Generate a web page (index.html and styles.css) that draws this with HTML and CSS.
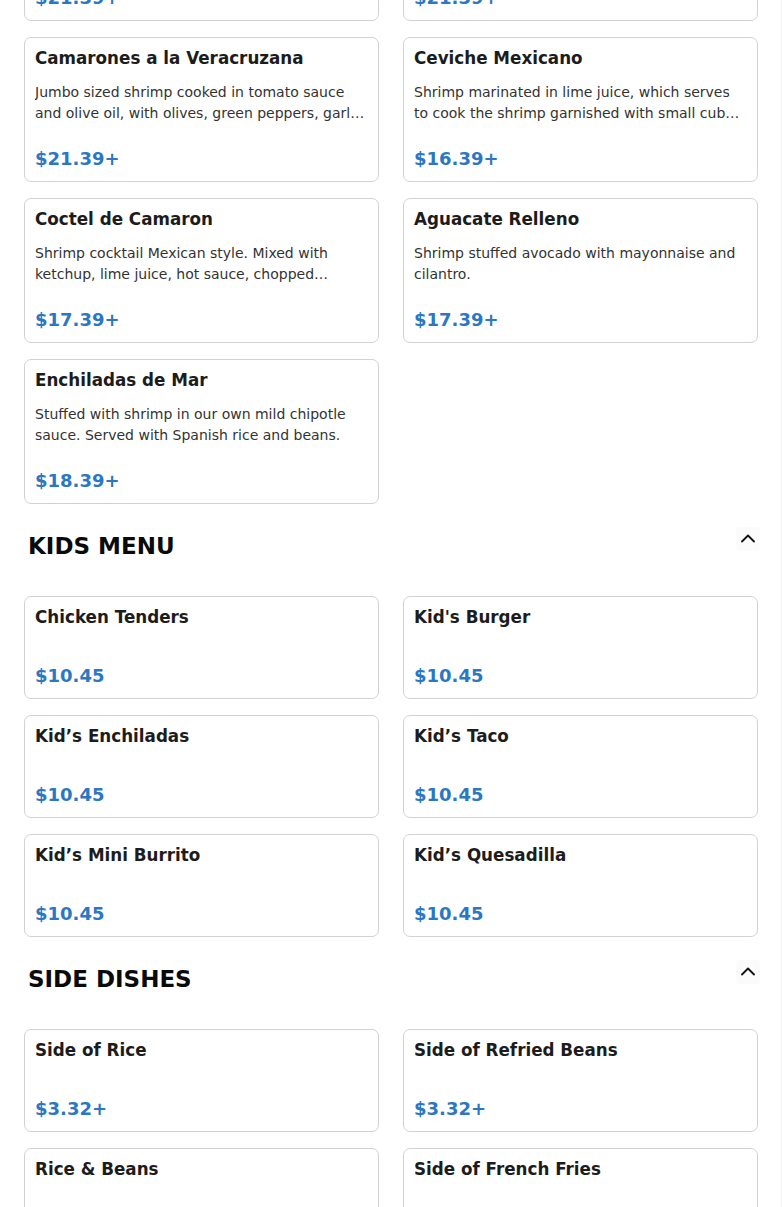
FILE: index.html
```html
<!DOCTYPE html>
<html lang="en">
<head>
<meta charset="utf-8">
<title>Menu</title>
<link rel="stylesheet" href="styles.css">
</head>
<body>
<main class="menu">
  <section class="section section-first">
    <div class="grid">
      <article class="card">
        <h3 class="card-title">Camarones al Mojo de Ajo</h3>
        <p class="card-desc">Jumbo shrimp sautéed in garlic butter. Served with Spanish rice, beans and tortillas.</p>
        <div class="card-price">$21.39+</div>
      </article>
      <article class="card">
        <h3 class="card-title">Camarones a la Diabla</h3>
        <p class="card-desc">Jumbo shrimp cooked in our spicy red diabla sauce. Served with rice and beans.</p>
        <div class="card-price">$21.39+</div>
      </article>
      <article class="card">
        <h3 class="card-title">Camarones a la Veracruzana</h3>
        <p class="card-desc">Jumbo sized shrimp cooked in tomato sauce and olive oil, with olives, green peppers, garlic and onions.</p>
        <div class="card-price">$21.39+</div>
      </article>
      <article class="card">
        <h3 class="card-title">Ceviche Mexicano</h3>
        <p class="card-desc">Shrimp marinated in lime juice, which serves to cook the shrimp garnished with small cubes of tomato, onion and cilantro.</p>
        <div class="card-price">$16.39+</div>
      </article>
      <article class="card">
        <h3 class="card-title">Coctel de Camaron</h3>
        <p class="card-desc">Shrimp cocktail Mexican style. Mixed with ketchup, lime juice, hot sauce, chopped onions, tomato and cilantro.</p>
        <div class="card-price">$17.39+</div>
      </article>
      <article class="card">
        <h3 class="card-title">Aguacate Relleno</h3>
        <p class="card-desc">Shrimp stuffed avocado with mayonnaise and cilantro.</p>
        <div class="card-price">$17.39+</div>
      </article>
      <article class="card">
        <h3 class="card-title">Enchiladas de Mar</h3>
        <p class="card-desc">Stuffed with shrimp in our own mild chipotle sauce. Served with Spanish rice and beans.</p>
        <div class="card-price">$18.39+</div>
      </article>
    </div>
  </section>

  <section class="section">
    <div class="section-head">
      <h2 class="section-title">KIDS MENU</h2>
      <button class="toggle" type="button" aria-label="Collapse">
        <svg width="14" height="14" viewBox="0 0 14 14"><path d="M1 9.5 L7 3.5 L13 9.5" fill="none" stroke="#111" stroke-width="1.8" stroke-linecap="round" stroke-linejoin="round"/></svg>
      </button>
    </div>
    <div class="grid">
      <article class="card">
        <h3 class="card-title">Chicken Tenders</h3>
        <p class="card-desc"></p>
        <div class="card-price">$10.45</div>
      </article>
      <article class="card">
        <h3 class="card-title">Kid's Burger</h3>
        <p class="card-desc"></p>
        <div class="card-price">$10.45</div>
      </article>
      <article class="card">
        <h3 class="card-title">Kid’s Enchiladas</h3>
        <p class="card-desc"></p>
        <div class="card-price">$10.45</div>
      </article>
      <article class="card">
        <h3 class="card-title">Kid’s Taco</h3>
        <p class="card-desc"></p>
        <div class="card-price">$10.45</div>
      </article>
      <article class="card">
        <h3 class="card-title">Kid’s Mini Burrito</h3>
        <p class="card-desc"></p>
        <div class="card-price">$10.45</div>
      </article>
      <article class="card">
        <h3 class="card-title">Kid’s Quesadilla</h3>
        <p class="card-desc"></p>
        <div class="card-price">$10.45</div>
      </article>
    </div>
  </section>

  <section class="section">
    <div class="section-head">
      <h2 class="section-title">SIDE DISHES</h2>
      <button class="toggle" type="button" aria-label="Collapse">
        <svg width="14" height="14" viewBox="0 0 14 14"><path d="M1 9.5 L7 3.5 L13 9.5" fill="none" stroke="#111" stroke-width="1.8" stroke-linecap="round" stroke-linejoin="round"/></svg>
      </button>
    </div>
    <div class="grid">
      <article class="card">
        <h3 class="card-title">Side of Rice</h3>
        <p class="card-desc"></p>
        <div class="card-price">$3.32+</div>
      </article>
      <article class="card">
        <h3 class="card-title">Side of Refried Beans</h3>
        <p class="card-desc"></p>
        <div class="card-price">$3.32+</div>
      </article>
      <article class="card">
        <h3 class="card-title">Rice &amp; Beans</h3>
        <p class="card-desc"></p>
        <div class="card-price">$4.32+</div>
      </article>
      <article class="card">
        <h3 class="card-title">Side of French Fries</h3>
        <p class="card-desc"></p>
        <div class="card-price">$3.32+</div>
      </article>
    </div>
  </section>
</main>
</body>
</html>
```

FILE: styles.css
```css
html, body {
  margin: 0;
  padding: 0;
  background: #ffffff;
}

body {
  font-family: "DejaVu Sans", "Liberation Sans", sans-serif;
  color: #1c1c1c;
  box-shadow: inset -1px 0 0 #f1f1f1;
  min-height: 100vh;
}

.menu {
  padding: 0 24px;
}

.section-first {
  margin-top: -124px;
}

.grid {
  display: grid;
  grid-template-columns: 1fr 1fr;
  column-gap: 24px;
  row-gap: 16px;
}

.card {
  display: flex;
  flex-direction: column;
  border: 1px solid #d2d2d2;
  border-radius: 7px;
  padding: 11px 10px 9px;
  background: #fff;
}

.card-title {
  margin: 0;
  font-size: 16.75px;
  line-height: 19px;
  font-weight: bold;
  color: #1c1c1c;
}

.card-desc {
  margin: 14px 0 21px;
  font-size: 14px;
  line-height: 21px;
  color: #333;
  display: -webkit-box;
  -webkit-line-clamp: 2;
  -webkit-box-orient: vertical;
  overflow: hidden;
}

.card-price {
  margin-top: auto;
  font-size: 18px;
  line-height: 27px;
  font-weight: bold;
  color: #2b77c2;
}

.section-head {
  display: flex;
  justify-content: space-between;
  align-items: flex-start;
  padding: 23px 0 34px 4px;
}

.section-title {
  margin: 3px 0 0;
  font-size: 23px;
  line-height: 32px;
  font-weight: bold;
  color: #0a0a0a;
}

.toggle {
  width: 24px;
  height: 24px;
  margin-right: -2px;
  padding: 0;
  border: 0;
  border-radius: 4px;
  background: #fbfbfb;
  display: flex;
  align-items: center;
  justify-content: center;
  cursor: pointer;
}
```
